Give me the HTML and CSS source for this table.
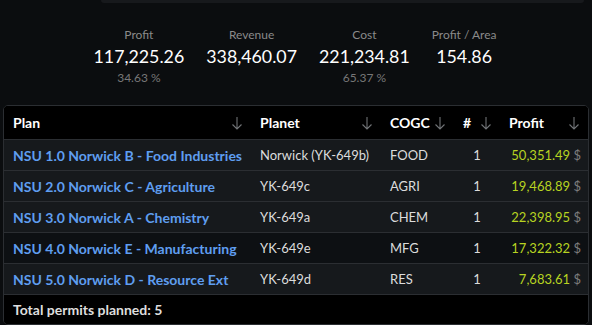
FILE: index.html
```html
<!DOCTYPE html>
<html>
<head>
<meta charset="utf-8">
<link rel="stylesheet" href="styles.css">
</head>
<body>
<div class="topcard"></div>
<div class="stats">
  <div class="stat"><div class="label">Profit</div><div class="value">117,225.26</div><div class="sub">34.63 %</div></div>
  <div class="stat"><div class="label">Revenue</div><div class="value">338,460.07</div><div class="sub">&nbsp;</div></div>
  <div class="stat"><div class="label">Cost</div><div class="value">221,234.81</div><div class="sub">65.37 %</div></div>
  <div class="stat"><div class="label">Profit / Area</div><div class="value">154.86</div><div class="sub">&nbsp;</div></div>
</div>
<div class="tablewrap">
<table class="grid">
  <colgroup>
    <col class="c-plan"><col class="c-planet"><col class="c-cogc"><col class="c-num"><col class="c-profit">
  </colgroup>
  <thead>
    <tr>
      <th><div class="hd"><span>Plan</span><svg class="arr" viewBox="0 0 12 14"><path d="M6 1v12M1.5 8.5L6 13l4.5-4.5"/></svg></div></th>
      <th><div class="hd"><span>Planet</span><svg class="arr" viewBox="0 0 12 14"><path d="M6 1v12M1.5 8.5L6 13l4.5-4.5"/></svg></div></th>
      <th><div class="hd"><span>COGC</span><svg class="arr" viewBox="0 0 12 14"><path d="M6 1v12M1.5 8.5L6 13l4.5-4.5"/></svg></div></th>
      <th><div class="hd"><span>#</span><svg class="arr" viewBox="0 0 12 14"><path d="M6 1v12M1.5 8.5L6 13l4.5-4.5"/></svg></div></th>
      <th><div class="hd"><span>Profit</span><svg class="arr" viewBox="0 0 12 14"><path d="M6 1v12M1.5 8.5L6 13l4.5-4.5"/></svg></div></th>
    </tr>
  </thead>
  <tbody>
    <tr><td class="plan">NSU 1.0 Norwick B - Food Industries</td><td>Norwick (YK-649b)</td><td>FOOD</td><td class="num">1</td><td class="profit"><span class="amt">50,351.49</span> <span class="cur">$</span></td></tr>
    <tr><td class="plan">NSU 2.0 Norwick C - Agriculture</td><td>YK-649c</td><td>AGRI</td><td class="num">1</td><td class="profit"><span class="amt">19,468.89</span> <span class="cur">$</span></td></tr>
    <tr><td class="plan">NSU 3.0 Norwick A - Chemistry</td><td>YK-649a</td><td>CHEM</td><td class="num">1</td><td class="profit"><span class="amt">22,398.95</span> <span class="cur">$</span></td></tr>
    <tr class="dark"><td class="plan">NSU 4.0 Norwick E - Manufacturing</td><td>YK-649e</td><td>MFG</td><td class="num">1</td><td class="profit"><span class="amt">17,322.32</span> <span class="cur">$</span></td></tr>
    <tr><td class="plan">NSU 5.0 Norwick D - Resource Ext</td><td>YK-649d</td><td>RES</td><td class="num">1</td><td class="profit"><span class="amt">7,683.61</span> <span class="cur">$</span></td></tr>
  </tbody>
  <tfoot>
    <tr><td colspan="5" class="foot">Total permits planned: 5</td></tr>
  </tfoot>
</table>
</div>
</body>
</html>
```
FILE: styles.css
```css
html, body {
  margin: 0;
  padding: 0;
  background: #0b0d0f;
  font-family: "Segoe UI", Lato, "Noto Sans", sans-serif;
  color: #dcdcdc;
}
.topcard {
  margin-left: 101px;
  width: 483px;
  height: 3px;
  background: #17191c;
  border-radius: 0 0 4px 4px;
}
.stats {
  display: flex;
  justify-content: center;
  gap: 22px;
  padding-top: 24px;
  margin-left: -2px;
}
.stat {
  display: flex;
  flex-direction: column;
  align-items: center;
}
.label {
  font-size: 12px;
  color: #8a8a8a;
  line-height: 16px;
}
.value {
  font-size: 17.8px;
  color: #ffffff;
  line-height: 26px;
}
.sub {
  font-size: 12px;
  color: #777;
  line-height: 18px;
}
.tablewrap {
  margin: 18px 0 0 3px;
  width: 584px;
  border: 1px solid #2b2e32;
  border-radius: 5px;
  overflow: hidden;
  background: #000;
}
.grid {
  width: 100%;
  border-collapse: collapse;
  font-size: 13px;
}
.c-plan { width: 247px; }
.c-planet { width: 130px; }
.c-cogc { width: 73px; }
.c-num { width: 46px; }
.c-profit { width: 88px; }
th {
  background: #000;
  color: #fff;
  font-weight: 700;
  font-size: 14px;
  text-align: left;
  padding: 0 8px 0 9px;
  height: 33px;
  border-bottom: 1px solid #2b2e32;
}
.hd {
  display: flex;
  justify-content: space-between;
  align-items: center;
}
.arr {
  width: 12px;
  height: 14px;
  fill: none;
  stroke: #6f7275;
  stroke-width: 1.1;
}
td {
  background: #16191c;
  height: 30px;
  padding: 0 9px;
  border-bottom: 1px solid #2b2e32;
  color: #dcdcdc;
  white-space: nowrap;
}
tr.dark td { background: #0d1013; }
td.plan {
  color: #5f9ef0;
  font-weight: 700;
  font-size: 14px;
}
td.num { text-align: center; }
td.profit {
  text-align: right;
  padding-right: 7px;
}
.amt { color: #b7d321; }
.cur { color: #7d7d7d; }
td.foot {
  background: #000;
  border-bottom: none;
  font-weight: 700;
  font-size: 14px;
  color: #dedede;
  height: 29px;
}
```
